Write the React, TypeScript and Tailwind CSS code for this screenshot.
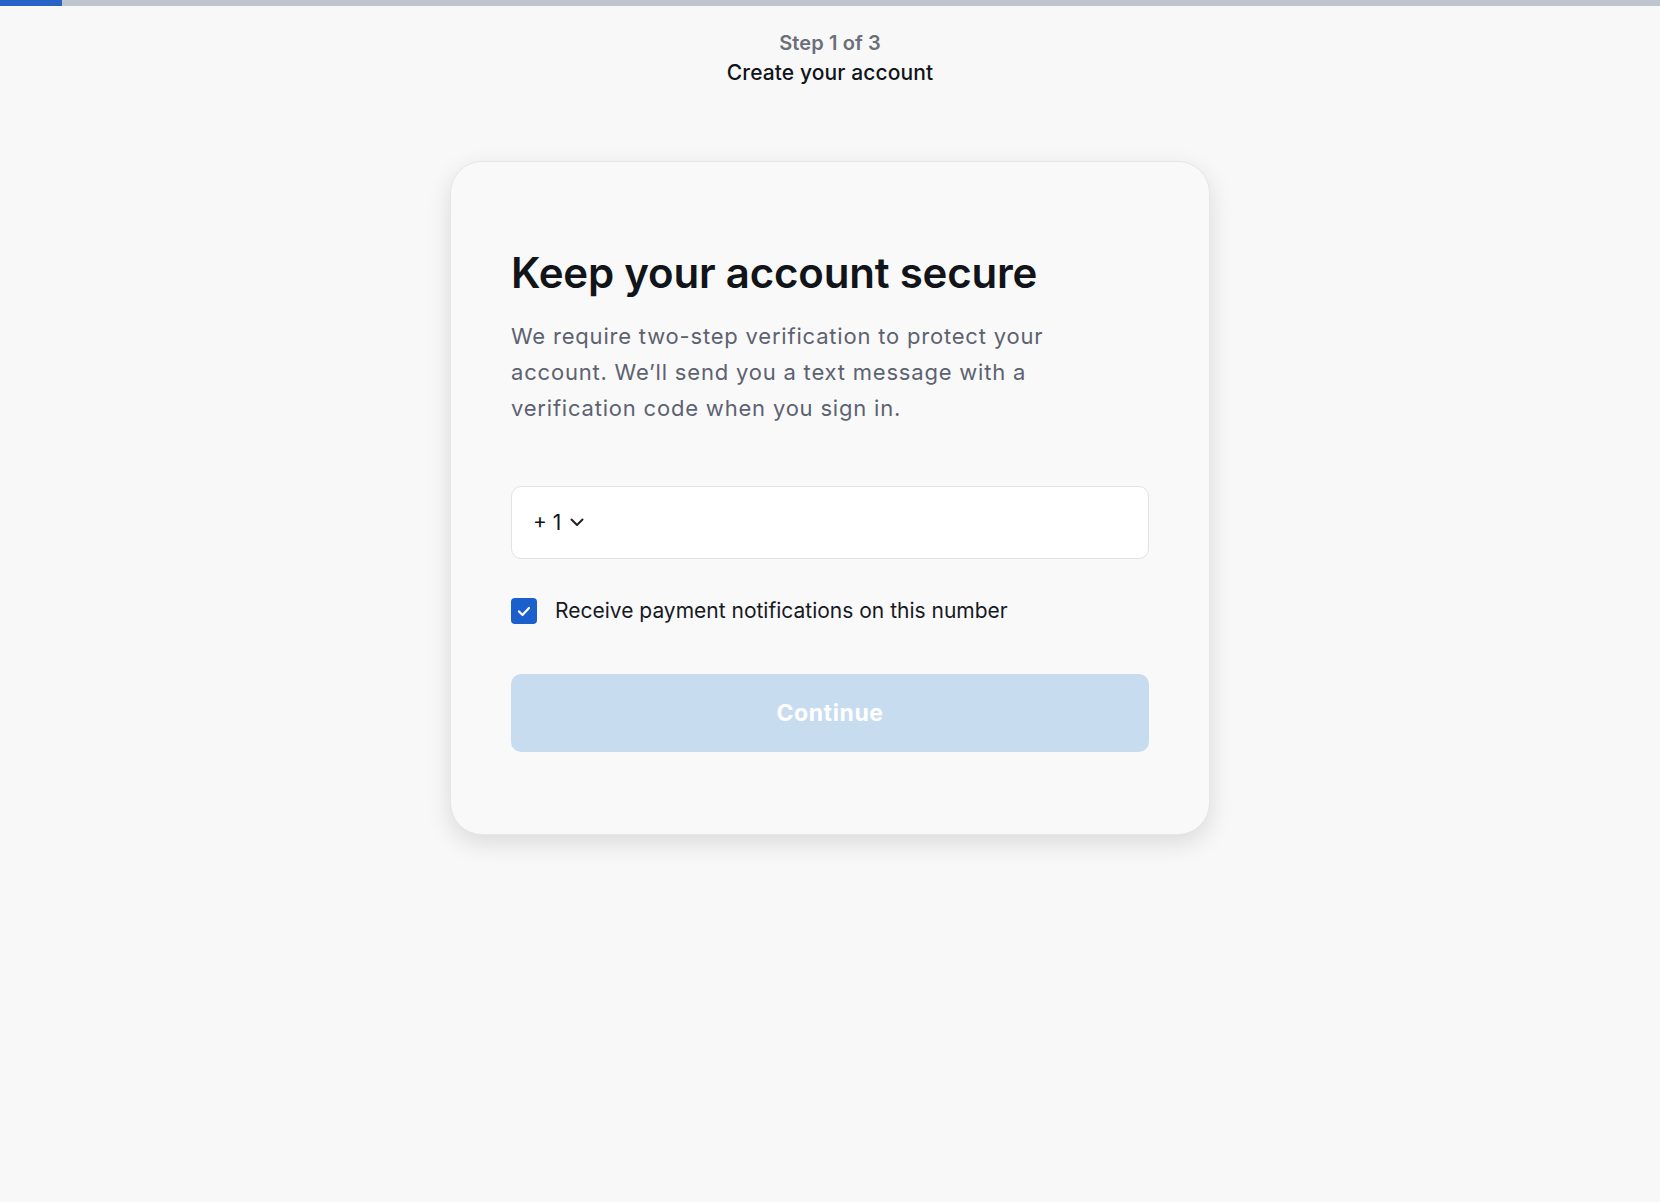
import React from "react";

export default function App() {
  return (
    <div className="min-h-screen bg-[#f8f8f8] font-['Inter',sans-serif]">
      <div className="flex h-[6px] w-full bg-[#c0c4cd]">
        <div className="h-full w-[62px] bg-[#2764c5]" />
      </div>
      <div className="flex flex-col items-center pt-[22px]">
        <div className="text-[20px] font-semibold leading-[30px] text-[#6b6f78] tracking-[0.1px]">Step 1 of 3</div>
        <div className="text-[21px] font-medium leading-[30px] text-[#111418] tracking-[0.1px]">Create your account</div>
      </div>
      <div className="flex justify-center pt-[73px]">
        <div className="w-[760px] rounded-[32px] border border-[#e6e6e6] bg-[#f9f9f9] px-[60px] pt-[86px] pb-[82px] shadow-[0_8px_24px_rgba(0,0,0,0.12)]">
          <h1 className="text-[42px] font-semibold leading-[50px] tracking-[-0.2px] text-[#111418]">Keep your account secure</h1>
          <p className="mt-[20px] max-w-[560px] text-[22px] leading-[36px] text-[#5d6270] tracking-[0.8px]">
            We require two-step verification to protect your account. We’ll send you a text message with a verification code when you sign in.
          </p>
          <div className="mt-[60px] flex h-[73px] items-center rounded-[10px] border border-[#e3e3e3] bg-white px-[21px]">
            <span className="text-[21px] text-[#111418]">+ 1</span>
            <svg className="ml-[9px]" width="14" height="9" viewBox="0 0 14 9" fill="none">
              <path d="M1.5 1.5L7 7L12.5 1.5" stroke="#222" strokeWidth="2" strokeLinecap="round" strokeLinejoin="round" />
            </svg>
          </div>
          <label className="mt-[38px] flex items-center gap-[18px]">
            <span className="flex h-[26px] w-[26px] items-center justify-center rounded-[4px] bg-[#1a5fcc]">
              <svg width="14" height="11" viewBox="0 0 14 11" fill="none">
                <path d="M2 5.5L5.5 9L12 2" stroke="white" strokeWidth="2.2" strokeLinecap="round" strokeLinejoin="round" />
              </svg>
            </span>
            <span className="text-[21px] leading-[28px] text-[#161a24]">Receive payment notifications on this number</span>
          </label>
          <button className="mt-[49px] flex h-[78px] w-full items-center justify-center rounded-[10px] bg-[#c8dcf0] text-[23px] font-bold tracking-[0.6px] text-white">
            Continue
          </button>
        </div>
      </div>
    </div>
  );
}
